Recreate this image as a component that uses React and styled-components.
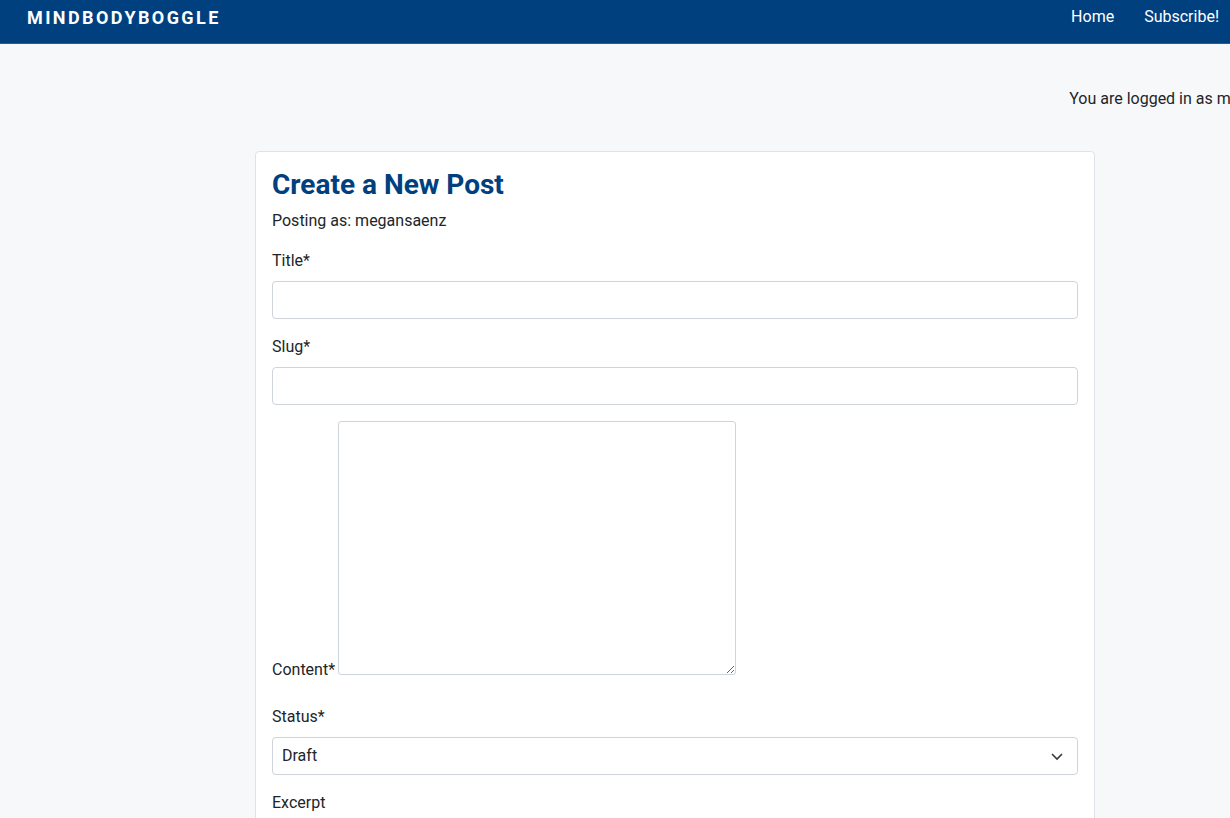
import React from "react";
import styled, { createGlobalStyle } from "styled-components";

const GlobalStyle = createGlobalStyle`
  html, body {
    margin: 0;
    padding: 0;
    overflow: hidden;
    background: #f7f8fa;
  }
  body {
    font-family: Roboto, "Liberation Sans", sans-serif;
    color: #212529;
    font-size: 16px;
    line-height: 1.5;
  }
`;

const Navbar = styled.header`
  width: 1230px;
  height: 44px;
  background: #00407f;
  border-bottom: 1px solid #2a5d92;
  display: flex;
  align-items: center;
  justify-content: space-between;
  padding: 0 11px 9px 27px;
  box-sizing: border-box;
`;

const Brand = styled.a`
  color: #fff;
  font-weight: 700;
  font-size: 18px;
  letter-spacing: 2.4px;
  text-decoration: none;
`;

const NavList = styled.ul`
  list-style: none;
  margin: 0;
  padding: 0;
  display: flex;
`;

const NavItem = styled.li`
  color: #fff;
  padding: 0 15px;
  &:last-child {
    padding-right: 0;
  }
`;

const Page = styled.main`
  width: 1350px;
  padding: 0 0 40px;
`;

const LoginBar = styled.div`
  display: flex;
  justify-content: flex-end;
  padding: 43px 42px 0 0;
  height: 64px;
`;

const Card = styled.section`
  width: 840px;
  margin: 0 auto;
  background: #fff;
  border: 1px solid #dfe2e6;
  border-radius: 4px;
  box-sizing: border-box;
  padding: 16px 16px 40px;
`;

const Heading = styled.h1`
  margin: 0 0 7px;
  color: #00407f;
  font-size: 28px;
  font-weight: 700;
  line-height: 1.2;
`;

const Byline = styled.p`
  margin: 0 0 16px;
`;

const Field = styled.div`
  margin-bottom: 16px;
`;

const Label = styled.label`
  display: block;
  margin-bottom: 8px;
`;

const TextInput = styled.input`
  display: block;
  width: 100%;
  height: 38px;
  box-sizing: border-box;
  border: 1px solid #ced4da;
  border-radius: 4px;
  padding: 6px 10px;
  font: inherit;
`;

const ContentRow = styled.div`
  display: flex;
  align-items: flex-end;
  margin-bottom: 30px;
`;

const InlineLabel = styled.label`
  line-height: 16px;
  margin-bottom: -3px;
`;

const TextArea = styled.textarea`
  width: 398px;
  height: 254px;
  box-sizing: border-box;
  border: 1px solid #ced4da;
  border-radius: 3px;
  margin-left: 3px;
  font: inherit;
  resize: both;
`;

const SelectWrap = styled.div`
  position: relative;
  height: 38px;
  border: 1px solid #ced4da;
  border-radius: 4px;
  box-sizing: border-box;
  display: flex;
  align-items: center;
  padding: 0 9px;
`;

const Chevron = styled.svg`
  position: absolute;
  right: 14px;
  top: 13px;
`;

export default function App() {
  return (
    <>
      <GlobalStyle />
      <Navbar>
        <Brand href="#">MINDBODYBOGGLE</Brand>
        <NavList>
          <NavItem>Home</NavItem>
          <NavItem>Subscribe!</NavItem>
        </NavList>
      </Navbar>
      <Page>
        <LoginBar>You are logged in as megansaenz</LoginBar>
        <Card>
          <Heading>Create a New Post</Heading>
          <Byline>Posting as: megansaenz</Byline>
          <Field>
            <Label>Title*</Label>
            <TextInput type="text" />
          </Field>
          <Field>
            <Label>Slug*</Label>
            <TextInput type="text" />
          </Field>
          <ContentRow>
            <InlineLabel>Content*</InlineLabel>
            <TextArea />
          </ContentRow>
          <Field>
            <Label>Status*</Label>
            <SelectWrap>
              Draft
              <Chevron width="12" height="10" viewBox="0 0 12 10">
                <path d="M1 3l5 5 5-5" fill="none" stroke="#343a40" strokeWidth="1.6" />
              </Chevron>
            </SelectWrap>
          </Field>
          <Field>
            <Label>Excerpt</Label>
            <TextInput type="text" />
          </Field>
        </Card>
      </Page>
    </>
  );
}
